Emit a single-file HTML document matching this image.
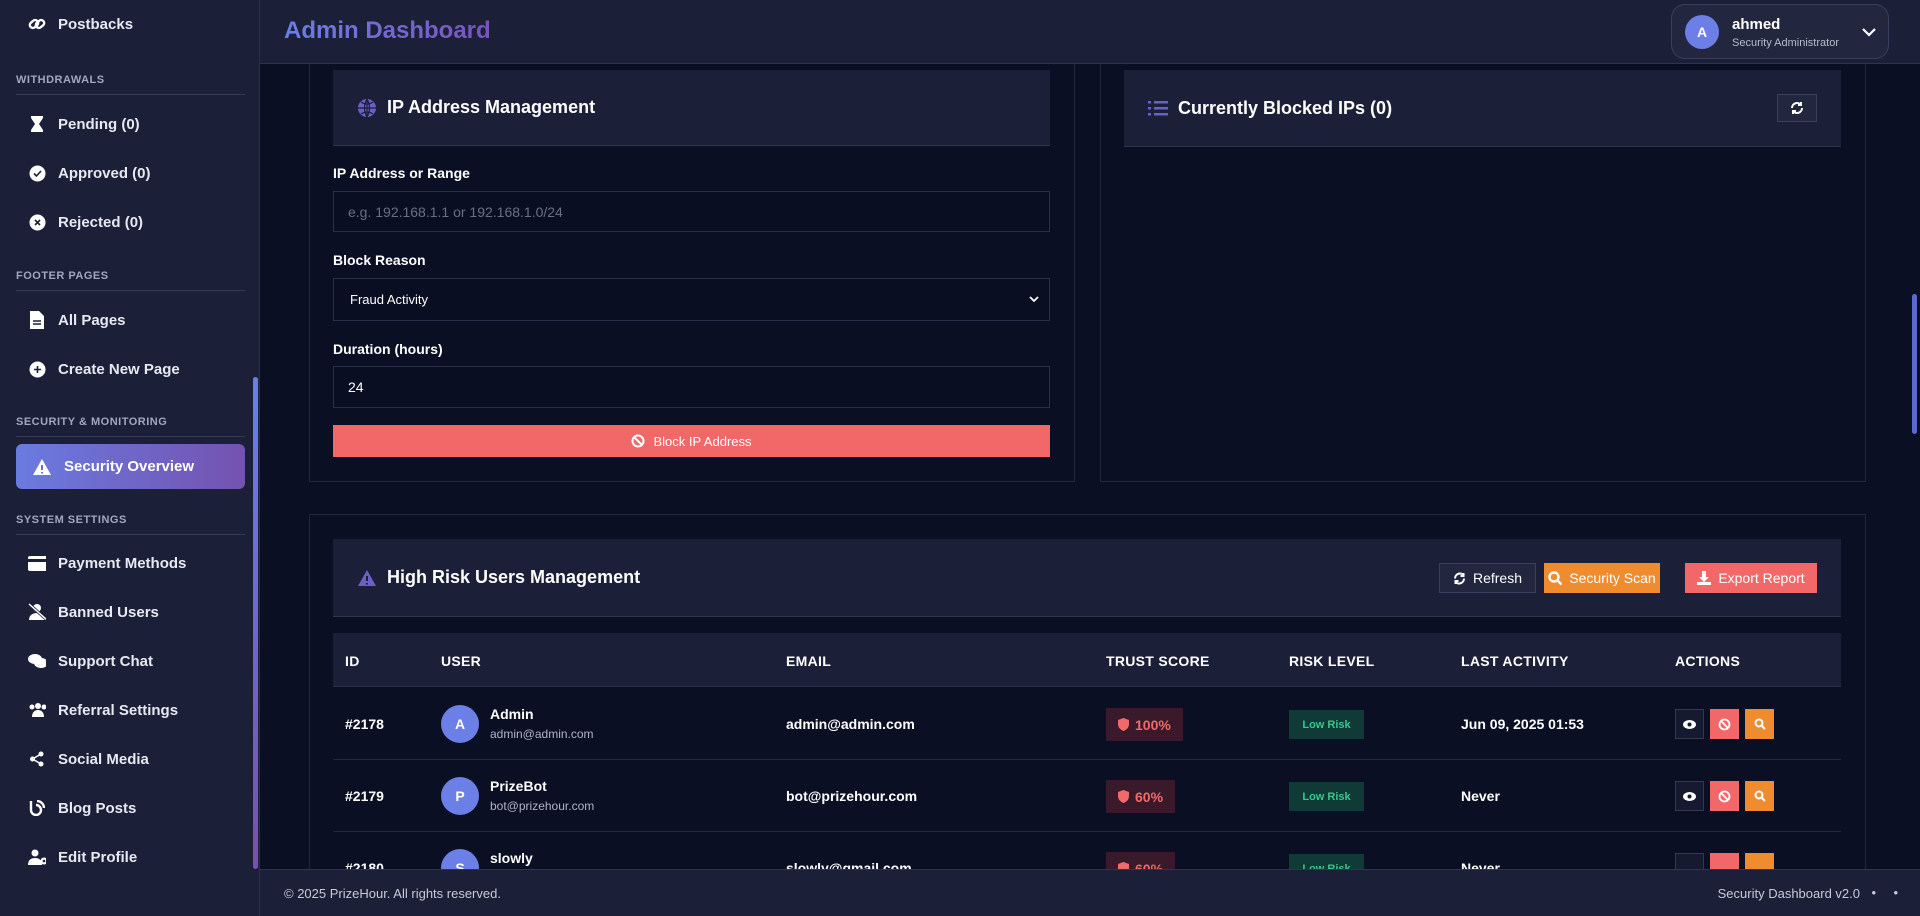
<!DOCTYPE html>
<html><head><meta charset="utf-8"><style>
*{box-sizing:border-box;margin:0;padding:0}
body{width:1920px;height:916px;overflow:hidden;background:#0b0f24;font-family:"Liberation Sans",sans-serif;color:#fff;position:relative}
.sb{position:absolute;left:0;top:0;width:260px;height:916px;background:#1b1f38;border-right:1px solid #2a2f4a;z-index:6}
.sb .it{position:absolute;left:28px;font-size:15px;font-weight:bold;color:#e8e9f0;display:flex;align-items:center;gap:12px;height:20px;transform:translateY(-50%)}
.sb .ic{width:18px;height:18px;display:flex;align-items:center;justify-content:center}
.sec{position:absolute;left:16px;width:229px;font-size:11px;font-weight:bold;color:#a3a7bd;letter-spacing:.5px;border-bottom:1px solid #353a5a;padding-bottom:8px}
.act{position:absolute;left:16px;top:444px;width:229px;height:45px;border-radius:6px;background:linear-gradient(90deg,#6a7be0,#7452b0);display:flex;align-items:center;padding-left:16px;gap:12px;font-weight:bold;font-size:15px}
.hdr{position:absolute;left:260px;top:0;right:0;height:64px;background:#1b1f38;border-bottom:1px solid #2f3450;z-index:5}
.ttl{position:absolute;left:24px;top:17px;font-size:24px;font-weight:bold;background:linear-gradient(90deg,#6b7fe6,#7a54b8);-webkit-background-clip:text;color:transparent}
.pill{position:absolute;left:1411px;top:4px;width:218px;height:55px;border:1px solid #3a3f5c;border-radius:14px;background:#22273f}
.av{border-radius:50%;background:#6b7fe6;display:flex;align-items:center;justify-content:center;font-weight:bold;color:#fff}
.card{position:absolute;border:1px solid #23283f;background:#0b0f24}
.ch{position:absolute;background:#1b1f38;border-bottom:1px solid #30354f;display:flex;align-items:center;padding-left:24px;font-size:18px;font-weight:bold;gap:10px}
.lbl{position:absolute;left:333px;font-size:14px;font-weight:bold}
.inp{position:absolute;left:333px;width:717px;border:1px solid #2a2f48;background:#0a0e22;font-size:14px;display:flex;align-items:center;padding-left:14px}
.btn{position:absolute;top:563px;height:30px;display:flex;align-items:center;justify-content:center;gap:7px;font-size:14px}
.th{position:absolute;top:633px;left:333px;width:1508px;height:54px;background:#1b1f38;border-bottom:1px solid #2a2f48}
.th span{position:absolute;top:20px;font-size:14px;font-weight:bold;letter-spacing:.3px}
.row{position:absolute;left:333px;width:1508px;border-bottom:1px solid #23283f;height:72px}
.c{position:absolute;font-size:14px;font-weight:bold;transform:translateY(-50%);top:36px}
.tr{position:absolute;top:20px;left:773px;height:33px;background:#3a1a2a;color:#f06a6a;font-size:14px;font-weight:bold;display:flex;align-items:center;padding:0 12px;gap:6px}
.lr{position:absolute;top:22px;left:956px;width:75px;height:29px;background:#0f3a36;color:#3cc48c;font-size:11px;font-weight:bold;display:flex;align-items:center;justify-content:center}
.ab{position:absolute;top:21px;width:29px;height:30px;display:flex;align-items:center;justify-content:center}
.ft{position:absolute;left:260px;top:869px;right:0;height:47px;background:#1b1f38;border-top:1px solid #2f3450;font-size:13px;color:#c8cad8;z-index:5}
</style></head><body>
<div class="sb">
 <div class="it" style="top:24px"><span class="ic"><svg width="18" height="18" viewBox="0 0 18 18" fill="none" stroke="#fff" stroke-width="2.4"><rect x="1.5" y="6" width="9" height="6" rx="3" transform="rotate(-40 6 9)"/><rect x="7.5" y="6" width="9" height="6" rx="3" transform="rotate(-40 12 9)"/></svg></span>Postbacks</div>
 <div class="sec" style="top:74px">WITHDRAWALS</div>
 <div class="it" style="top:124px"><span class="ic"><svg width="14" height="18" viewBox="0 0 14 18"><path d="M1 1h12v2l-4 6 4 6v2H1v-2l4-6-4-6z" fill="#fff"/></svg></span>Pending (0)</div>
 <div class="it" style="top:173px"><span class="ic"><svg width="17" height="17"><circle cx="8.5" cy="8.5" r="8" fill="#fff"/><path d="M5 8.5l2.5 2.5 4.5-5" stroke="#1b1f38" stroke-width="1.6" fill="none"/></svg></span>Approved (0)</div>
 <div class="it" style="top:222px"><span class="ic"><svg width="17" height="17"><circle cx="8.5" cy="8.5" r="8" fill="#fff"/><path d="M6 6l5 5M11 6l-5 5" stroke="#1b1f38" stroke-width="1.6"/></svg></span>Rejected (0)</div>
 <div class="sec" style="top:270px">FOOTER PAGES</div>
 <div class="it" style="top:320px"><span class="ic"><svg width="14" height="18"><path d="M0 0h9l5 5v13H0z" fill="#fff"/><path d="M3 10h8M3 13h8" stroke="#1b1f38" stroke-width="1.4"/></svg></span>All Pages</div>
 <div class="it" style="top:369px"><span class="ic"><svg width="17" height="17"><circle cx="8.5" cy="8.5" r="8" fill="#fff"/><path d="M8.5 5v7M5 8.5h7" stroke="#1b1f38" stroke-width="1.6"/></svg></span>Create New Page</div>
 <div class="sec" style="top:416px">SECURITY &amp; MONITORING</div>
 <div class="act"><svg width="20" height="18"><path d="M10 1L19 17H1z" fill="#fff"/><path d="M10 7v5M10 14v1.5" stroke="#6a6ad0" stroke-width="2"/></svg>Security Overview</div>
 <div class="sec" style="top:514px">SYSTEM SETTINGS</div>
 <div class="it" style="top:563px"><span class="ic"><svg width="20" height="15"><rect width="20" height="15" rx="2" fill="#fff"/><rect y="3" width="20" height="3" fill="#1b1f38"/></svg></span>Payment Methods</div>
 <div class="it" style="top:612px"><span class="ic"><svg width="20" height="18"><circle cx="9" cy="5" r="4" fill="#fff"/><path d="M1 17c0-5 4-7 8-7s8 2 8 7z" fill="#fff"/><path d="M1 1l18 16" stroke="#1b1f38" stroke-width="3"/><path d="M1 1l18 16" stroke="#fff" stroke-width="1.5"/></svg></span>Banned Users</div>
 <div class="it" style="top:661px"><span class="ic"><svg width="20" height="16"><ellipse cx="7" cy="6" rx="7" ry="5" fill="#fff"/><ellipse cx="13" cy="10" rx="7" ry="5" fill="#fff"/></svg></span>Support Chat</div>
 <div class="it" style="top:710px"><span class="ic"><svg width="20" height="16"><circle cx="4" cy="5" r="2.5" fill="#fff"/><circle cx="10" cy="4" r="3" fill="#fff"/><circle cx="16" cy="5" r="2.5" fill="#fff"/><path d="M4 15c0-5 3-7 6-7s6 2 6 7z" fill="#fff"/></svg></span>Referral Settings</div>
 <div class="it" style="top:759px"><span class="ic"><svg width="16" height="16"><circle cx="12" cy="3" r="2.5" fill="#fff"/><circle cx="3.5" cy="8" r="2.5" fill="#fff"/><circle cx="12" cy="13" r="2.5" fill="#fff"/><path d="M12 3L3.5 8 12 13" stroke="#fff" stroke-width="1.5" fill="none"/></svg></span>Social Media</div>
 <div class="it" style="top:808px"><span class="ic"><svg width="16" height="16" fill="none" stroke="#fff" stroke-width="2.4"><path d="M2 1v9a5 5 0 1 0 5-5"/><path d="M8 1a7 7 0 0 1 7 7"/></svg></span>Blog Posts</div>
 <div class="it" style="top:857px"><span class="ic"><svg width="20" height="16"><circle cx="7" cy="4" r="3.5" fill="#fff"/><path d="M0 16c0-5 3-7 7-7s7 2 7 7z" fill="#fff"/><circle cx="16" cy="12" r="3.5" fill="#fff"/><circle cx="16" cy="12" r="1.3" fill="#1b1f38"/></svg></span>Edit Profile</div>
 <div style="position:absolute;left:253px;top:377px;width:5px;height:492px;border-radius:3px;background:linear-gradient(#6b7fe6,#7452b0)"></div>
</div>
<div class="hdr"><div class="ttl">Admin Dashboard</div>
 <div class="pill"><div class="av" style="position:absolute;left:13px;top:10px;width:34px;height:34px;font-size:14px">A</div>
 <div style="position:absolute;left:60px;top:11px;font-size:15px;font-weight:bold">ahmed</div>
 <div style="position:absolute;left:60px;top:32px;font-size:11px;color:#b8bbcc">Security Administrator</div>
 <svg style="position:absolute;left:190px;top:22px" width="14" height="10"><path d="M1 2l6 6 6-6" stroke="#fff" stroke-width="2.2" fill="none"/></svg></div>
</div>
<div style="position:absolute;left:1912px;top:294px;width:5px;height:140px;border-radius:3px;background:#5a6ad0"></div>
<div class="card" style="left:309px;top:50px;width:766px;height:432px;border-top:none"></div>
<div class="ch" style="left:333px;top:70px;width:717px;height:76px"><svg width="20" height="20"><circle cx="10" cy="10" r="9" fill="#6a60c8"/><path d="M1 10h18M10 1v18M4 4q6 4 12 0M4 16q6-4 12 0M10 1q-5 9 0 18M10 1q5 9 0 18" stroke="#1b1f38" stroke-width="1.2" fill="none"/></svg>IP Address Management</div>
<div class="lbl" style="top:165px">IP Address or Range</div>
<div class="inp" style="top:191px;height:41px;color:#6b6f85">e.g. 192.168.1.1 or 192.168.1.0/24</div>
<div class="lbl" style="top:252px">Block Reason</div>
<div class="inp" style="top:278px;height:43px;font-size:13px;padding-left:16px">Fraud Activity<svg style="position:absolute;right:10px;top:17px" width="10" height="7"><path d="M1 1l4 4 4-4" stroke="#fff" stroke-width="1.8" fill="none"/></svg></div>
<div class="lbl" style="top:341px">Duration (hours)</div>
<div class="inp" style="top:366px;height:42px">24</div>
<div style="position:absolute;left:333px;top:425px;width:717px;height:32px;background:#f26868;display:flex;align-items:center;justify-content:center;gap:8px;font-size:13px"><svg width="14" height="14"><circle cx="7" cy="7" r="5.5" stroke="#fff" stroke-width="2" fill="none"/><path d="M3 3l8 8" stroke="#fff" stroke-width="2"/></svg>Block IP Address</div>
<div class="card" style="left:1100px;top:50px;width:766px;height:432px;border-top:none"></div>
<div class="ch" style="left:1124px;top:70px;width:717px;height:77px"><svg width="20" height="16"><g fill="#6a60c8"><rect y="1" width="3" height="2.5"/><rect y="7" width="3" height="2.5"/><rect y="13" width="3" height="2.5"/><rect x="6" y="1" width="14" height="2.5"/><rect x="6" y="7" width="14" height="2.5"/><rect x="6" y="13" width="14" height="2.5"/></g></svg>Currently Blocked IPs (0)</div>
<div style="position:absolute;left:1777px;top:94px;width:40px;height:28px;border:1px solid #3a3f5c;background:#22273f;display:flex;align-items:center;justify-content:center"><svg width="14" height="14" fill="none" stroke="#fff" stroke-width="2"><path d="M2 7a5 5 0 0 1 9-3M12 7a5 5 0 0 1-9 3"/><path d="M11 1v3H8M3 13v-3h3"/></svg></div>
<div class="card" style="left:309px;top:514px;width:1557px;height:402px"></div>
<div class="ch" style="left:333px;top:539px;width:1508px;height:78px"><svg width="20" height="18"><path d="M10 1L19 17H1z" fill="#6a60c8"/><path d="M10 7v5M10 14v1.5" stroke="#1b1f38" stroke-width="2"/></svg>High Risk Users Management</div>
<div class="btn" style="left:1439px;width:97px;border:1px solid #3a3f5c;background:#22273f"><svg width="13" height="13" fill="none" stroke="#fff" stroke-width="2"><path d="M2 6.5a5 5 0 0 1 9-3M11 6.5a5 5 0 0 1-9 3"/><path d="M10.5 1v3h-3M2.5 12V9h3"/></svg>Refresh</div>
<div class="btn" style="left:1544px;width:116px;background:#f08c30"><svg width="14" height="14" fill="none" stroke="#fff" stroke-width="2.4"><circle cx="6" cy="6" r="4.5"/><path d="M9.5 9.5l4 4"/></svg>Security Scan</div>
<div class="btn" style="left:1685px;width:132px;background:#f26868"><svg width="14" height="14" fill="#fff"><path d="M5 0h4v6h3L7 11 2 6h3z"/><rect y="11" width="14" height="3"/></svg>Export Report</div>
<div class="th"><span style="left:12px">ID</span><span style="left:108px">USER</span><span style="left:453px">EMAIL</span><span style="left:773px">TRUST SCORE</span><span style="left:956px">RISK LEVEL</span><span style="left:1128px">LAST ACTIVITY</span><span style="left:1342px">ACTIONS</span></div>
<div class="row" style="top:688px">
 <div class="c" style="left:12px">#2178</div>
 <div class="av" style="position:absolute;left:108px;top:17px;width:38px;height:38px;font-size:14px">A</div>
 <div style="position:absolute;left:157px;top:18px;font-size:14px;font-weight:bold">Admin</div>
 <div style="position:absolute;left:157px;top:39px;font-size:12px;color:#b0b3c5">admin@admin.com</div>
 <div class="c" style="left:453px">admin@admin.com</div>
 <div class="tr"><svg width="11" height="13"><path d="M5.5 0L11 2v4c0 4-3 6-5.5 7C3 12 0 10 0 6V2z" fill="#f06a6a"/></svg>100%</div>
 <div class="lr">Low Risk</div>
 <div class="c" style="left:1128px">Jun 09, 2025 01:53</div>
 <div class="ab" style="left:1342px;border:1px solid #333852;background:#161a30"><svg width="13" height="9"><ellipse cx="6.5" cy="4.5" rx="6.5" ry="4.5" fill="#fff"/><circle cx="6.5" cy="4.5" r="2" fill="#161a30"/></svg></div>
 <div class="ab" style="left:1377px;background:#f26868"><svg width="13" height="13"><circle cx="6.5" cy="6.5" r="5" stroke="#fff" stroke-width="1.8" fill="none"/><path d="M3 3l7 7" stroke="#fff" stroke-width="1.8"/></svg></div>
 <div class="ab" style="left:1412px;background:#f08c30"><svg width="12" height="12" fill="none" stroke="#fff" stroke-width="2"><circle cx="5" cy="5" r="3.5"/><path d="M8 8l3 3"/></svg></div>
</div>
<div class="row" style="top:760px">
 <div class="c" style="left:12px">#2179</div>
 <div class="av" style="position:absolute;left:108px;top:17px;width:38px;height:38px;font-size:14px">P</div>
 <div style="position:absolute;left:157px;top:18px;font-size:14px;font-weight:bold">PrizeBot</div>
 <div style="position:absolute;left:157px;top:39px;font-size:12px;color:#b0b3c5">bot@prizehour.com</div>
 <div class="c" style="left:453px">bot@prizehour.com</div>
 <div class="tr"><svg width="11" height="13"><path d="M5.5 0L11 2v4c0 4-3 6-5.5 7C3 12 0 10 0 6V2z" fill="#f06a6a"/></svg>60%</div>
 <div class="lr">Low Risk</div>
 <div class="c" style="left:1128px">Never</div>
 <div class="ab" style="left:1342px;border:1px solid #333852;background:#161a30"><svg width="13" height="9"><ellipse cx="6.5" cy="4.5" rx="6.5" ry="4.5" fill="#fff"/><circle cx="6.5" cy="4.5" r="2" fill="#161a30"/></svg></div>
 <div class="ab" style="left:1377px;background:#f26868"><svg width="13" height="13"><circle cx="6.5" cy="6.5" r="5" stroke="#fff" stroke-width="1.8" fill="none"/><path d="M3 3l7 7" stroke="#fff" stroke-width="1.8"/></svg></div>
 <div class="ab" style="left:1412px;background:#f08c30"><svg width="12" height="12" fill="none" stroke="#fff" stroke-width="2"><circle cx="5" cy="5" r="3.5"/><path d="M8 8l3 3"/></svg></div>
</div>
<div class="row" style="top:832px">
 <div class="c" style="left:12px">#2180</div>
 <div class="av" style="position:absolute;left:108px;top:17px;width:38px;height:38px;font-size:14px">S</div>
 <div style="position:absolute;left:157px;top:18px;font-size:14px;font-weight:bold">slowly</div>
 <div class="c" style="left:453px">slowly@gmail.com</div>
 <div class="tr"><svg width="11" height="13"><path d="M5.5 0L11 2v4c0 4-3 6-5.5 7C3 12 0 10 0 6V2z" fill="#f06a6a"/></svg>60%</div>
 <div class="lr">Low Risk</div>
 <div class="c" style="left:1128px">Never</div>
 <div class="ab" style="left:1342px;border:1px solid #333852;background:#161a30"></div>
 <div class="ab" style="left:1377px;background:#f26868"></div>
 <div class="ab" style="left:1412px;background:#f08c30"></div>
</div>
<div class="ft"><span style="position:absolute;left:24px;top:16px">© 2025 PrizeHour. All rights reserved.</span><span style="position:absolute;right:60px;top:16px">Security Dashboard v2.0</span><span style="position:absolute;right:44px;top:15px">•</span><span style="position:absolute;right:22px;top:15px">•</span></div>
</body></html>
